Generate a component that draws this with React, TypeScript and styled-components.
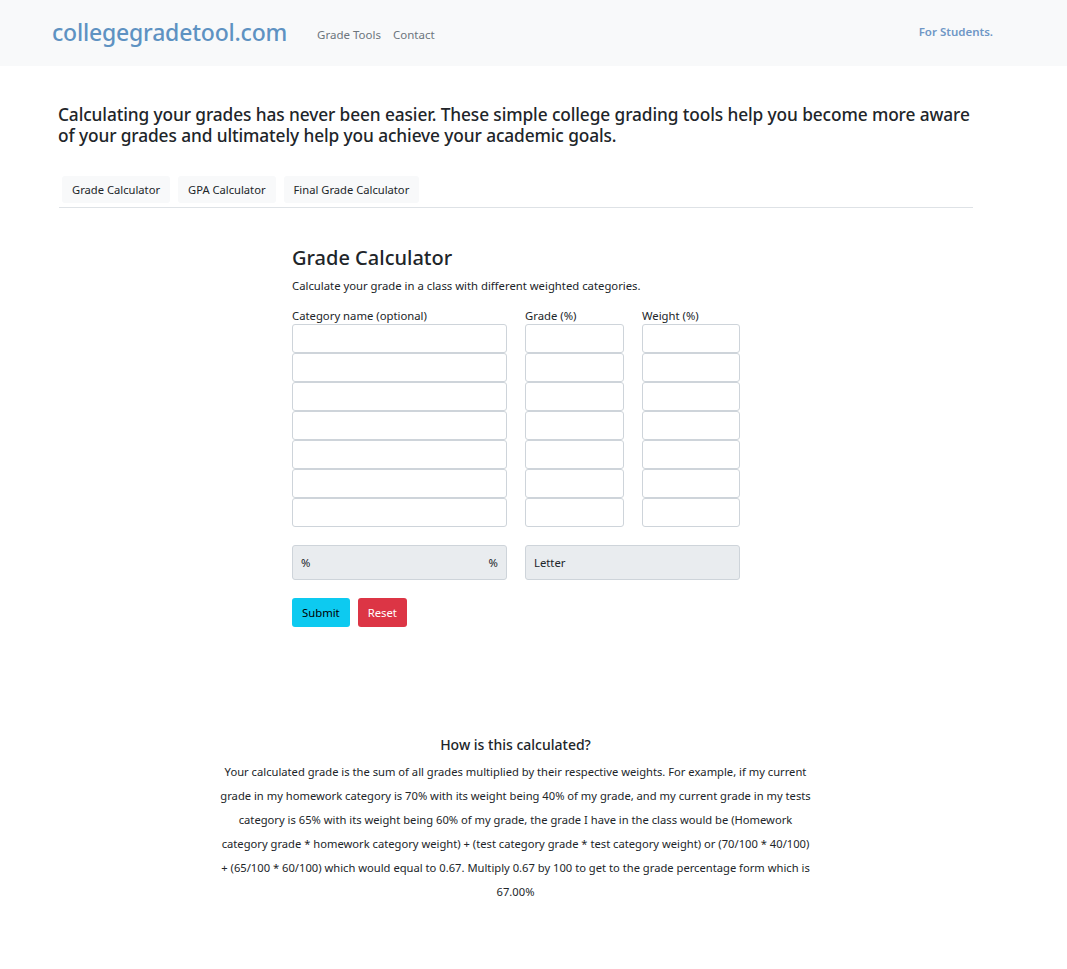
import React from "react";
import styled, { createGlobalStyle } from "styled-components";

const Global = createGlobalStyle`
  html, body { margin: 0; padding: 0; background: #fff; }
  body { font-family: "Noto Sans", "Open Sans", sans-serif; color: #212529; }
  * { box-sizing: border-box; }
`;

const Navbar = styled.nav`
  height: 66px;
  background: #f8f9fa;
  display: flex;
  align-items: center;
  padding: 0 74px 0 52px;
`;

const Brand = styled.a`
  font-size: 23px;
  font-weight: 500;
  color: #5e92c2;
  letter-spacing: -0.2px;
  text-decoration: none;
  margin-right: 30px;
  margin-top: -2px;
`;

const NavLinks = styled.div`
  display: flex;
  gap: 12px;
  flex: 1;
`;

const NavLink = styled.a`
  font-size: 11.5px;
  color: #6c757d;
  text-decoration: none;
  margin-top: 2px;
`;

const Right = styled.span`
  font-size: 11.5px;
  font-weight: 600;
  color: #6f97c6;
  margin-top: -4px;
`;

const Container = styled.main`
  width: 914px;
  margin-left: 59px;
`;

const Lead = styled.h5`
  margin: 38px 0 0 -1px;
  font-size: 17.3px;
  line-height: 21px;
  font-weight: 500;
  letter-spacing: -0.1px;
`;

const Tabs = styled.div`
  display: flex;
  gap: 8px;
  margin-top: 30px;
  padding: 0 0 4px 3px;
  border-bottom: 1px solid #dee2e6;
`;

const Tab = styled.button`
  height: 27px;
  padding: 0 10px;
  border: none;
  border-radius: 3px;
  background: #f8f9fa;
  font-family: inherit;
  font-size: 11.2px;
  color: #212529;
`;

const Calc = styled.section`
  width: 448px;
  margin: 37px 0 0 233px;
`;

const Title = styled.h4`
  margin: 0;
  font-size: 20px;
  line-height: 25px;
  font-weight: 500;
`;

const Desc = styled.p`
  margin: 7px 0 0;
  font-size: 11.3px;
  line-height: 18px;
`;

const Grid = styled.div`
  display: grid;
  grid-template-columns: 215px 99px 98px;
  column-gap: 18px;
  margin-top: 15px;
`;

const Column = styled.div`
  display: flex;
  flex-direction: column;
`;

const Label = styled.label`
  font-size: 11.3px;
  line-height: 12px;
  margin-bottom: 2px;
`;

const Input = styled.input`
  height: 29px;
  width: 100%;
  border: 1px solid #ced4da;
  border-radius: 3px;
  background: #fff;
  font-family: inherit;
`;

const Results = styled.div`
  display: grid;
  grid-template-columns: 215px 215px;
  column-gap: 18px;
  margin-top: 18px;
`;

const ResultBox = styled.div`
  height: 35px;
  border: 1px solid #ced4da;
  border-radius: 3px;
  background: #e9ecef;
  display: flex;
  align-items: center;
  justify-content: space-between;
  padding: 0 8px;
  font-size: 11.3px;
  color: #212529;
`;

const Buttons = styled.div`
  display: flex;
  gap: 8px;
  margin-top: 18px;
`;

const Btn = styled.button<{ $variant: "info" | "danger" }>`
  height: 29px;
  padding: 0 10px;
  border: none;
  border-radius: 3px;
  font-family: inherit;
  font-size: 11.3px;
  background: ${(p) => (p.$variant === "info" ? "#0dcaf0" : "#dc3545")};
  color: ${(p) => (p.$variant === "info" ? "#000" : "#fff")};
`;

const Explain = styled.section`
  width: 597px;
  margin: 108px 0 0 158px;
  text-align: center;
`;

const ExplainTitle = styled.h6`
  margin: 0;
  font-size: 14px;
  line-height: 20px;
  font-weight: 500;
`;

const ExplainText = styled.p`
  margin: 5px 0 0;
  font-size: 11.2px;
  line-height: 24px;
  color: #212529;
`;

export default function App() {
  const rows = Array.from({ length: 7 });
  return (
    <>
      <Global />
      <Navbar>
        <Brand href="#">collegegradetool.com</Brand>
        <NavLinks>
          <NavLink href="#">Grade Tools</NavLink>
          <NavLink href="#">Contact</NavLink>
        </NavLinks>
        <Right>For Students.</Right>
      </Navbar>
      <Container>
        <Lead>
          Calculating your grades has never been easier. These simple college grading tools help you become more aware
          of your grades and ultimately help you achieve your academic goals.
        </Lead>
        <Tabs>
          <Tab>Grade Calculator</Tab>
          <Tab>GPA Calculator</Tab>
          <Tab>Final Grade Calculator</Tab>
        </Tabs>
        <Calc>
          <Title>Grade Calculator</Title>
          <Desc>Calculate your grade in a class with different weighted categories.</Desc>
          <Grid>
            <Column>
              <Label>Category name (optional)</Label>
              {rows.map((_, i) => (
                <Input key={i} />
              ))}
            </Column>
            <Column>
              <Label>Grade (%)</Label>
              {rows.map((_, i) => (
                <Input key={i} />
              ))}
            </Column>
            <Column>
              <Label>Weight (%)</Label>
              {rows.map((_, i) => (
                <Input key={i} />
              ))}
            </Column>
          </Grid>
          <Results>
            <ResultBox>
              <span>%</span>
              <span>%</span>
            </ResultBox>
            <ResultBox>
              <span>Letter</span>
            </ResultBox>
          </Results>
          <Buttons>
            <Btn $variant="info">Submit</Btn>
            <Btn $variant="danger">Reset</Btn>
          </Buttons>
        </Calc>
        <Explain>
          <ExplainTitle>How is this calculated?</ExplainTitle>
          <ExplainText>
            Your calculated grade is the sum of all grades multiplied by their respective weights. For example, if my current
            grade in my homework category is 70% with its weight being 40% of my grade, and my current grade in my tests
            category is 65% with its weight being 60% of my grade, the grade I have in the class would be (Homework
            category grade * homework category weight) + (test category grade * test category weight) or (70/100 * 40/100)
            + (65/100 * 60/100) which would equal to 0.67. Multiply 0.67 by 100 to get to the grade percentage form which is
            67.00%
          </ExplainText>
        </Explain>
      </Container>
    </>
  );
}
